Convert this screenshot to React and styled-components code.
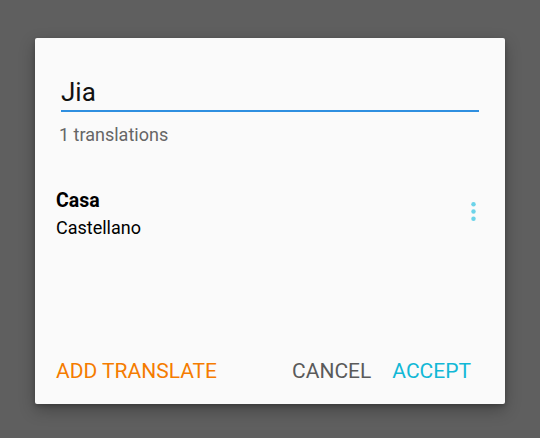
import React from "react";
import styled, { createGlobalStyle } from "styled-components";

const GlobalStyle = createGlobalStyle`
  html, body {
    margin: 0;
    padding: 0;
    background: #5f5f5f;
    font-family: Roboto, "Noto Sans", "Liberation Sans", sans-serif;
  }
`;

const Page = styled.div`
  width: 540px;
  height: 438px;
  padding: 38px 35px;
  box-sizing: border-box;
`;

const Dialog = styled.div`
  width: 470px;
  height: 366px;
  background: #fafafa;
  border-radius: 2px;
  box-shadow: 0 6px 16px rgba(0, 0, 0, 0.28), 0 2px 4px rgba(0, 0, 0, 0.2);
  display: flex;
  flex-direction: column;
  box-sizing: border-box;
  padding-top: 37px;
`;

const NameField = styled.div`
  margin: 0 26px 0 26px;
  padding-bottom: 1px;
  border-bottom: 2px solid #2f8fe0;
  font-size: 26px;
  line-height: 34px;
  color: #111;
`;

const Count = styled.div`
  margin: 11px 0 0 24px;
  font-size: 18px;
  line-height: 24px;
  color: #666;
`;

const Item = styled.div`
  display: flex;
  align-items: flex-start;
  justify-content: space-between;
  margin-top: 40px;
  padding: 0 17px 0 21px;
`;

const ItemText = styled.div`
  display: flex;
  flex-direction: column;
  font-size: 18px;
  line-height: 27px;
  color: #000;
`;

const Word = styled.span`
  font-size: 19.5px;
  font-weight: 700;
`;

const MoreButton = styled.div`
  width: 29px;
  height: 29px;
  margin-top: 10px;
  color: #6cd3e9;
`;

const Footer = styled.div`
  margin-top: auto;
  display: flex;
  align-items: center;
  padding: 0 34px 21px 21px;
`;

const TextButton = styled.span`
  font-size: 21px;
  line-height: 24px;
  color: ${(p) => p.color};
  margin-left: ${(p) => p.gap || 0}px;
  text-transform: uppercase;
`;

const Spacer = styled.div`
  flex: 1;
`;

const MoreVert = () => (
  <svg width="29" height="29" viewBox="0 0 24 24" fill="currentColor">
    <circle cx="12" cy="6" r="1.85" />
    <circle cx="12" cy="12" r="1.85" />
    <circle cx="12" cy="18" r="1.85" />
  </svg>
);

export default function App() {
  return (
    <>
      <GlobalStyle />
      <Page>
        <Dialog>
          <NameField>Jia</NameField>
          <Count>1 translations</Count>
          <Item>
            <ItemText>
              <Word>Casa</Word>
              <span>Castellano</span>
            </ItemText>
            <MoreButton>
              <MoreVert />
            </MoreButton>
          </Item>
          <Footer>
            <TextButton color="#f57c00">Add translate</TextButton>
            <Spacer />
            <TextButton color="#5a5a5a">Cancel</TextButton>
            <TextButton color="#12b8d6" gap={21}>Accept</TextButton>
          </Footer>
        </Dialog>
      </Page>
    </>
  );
}
